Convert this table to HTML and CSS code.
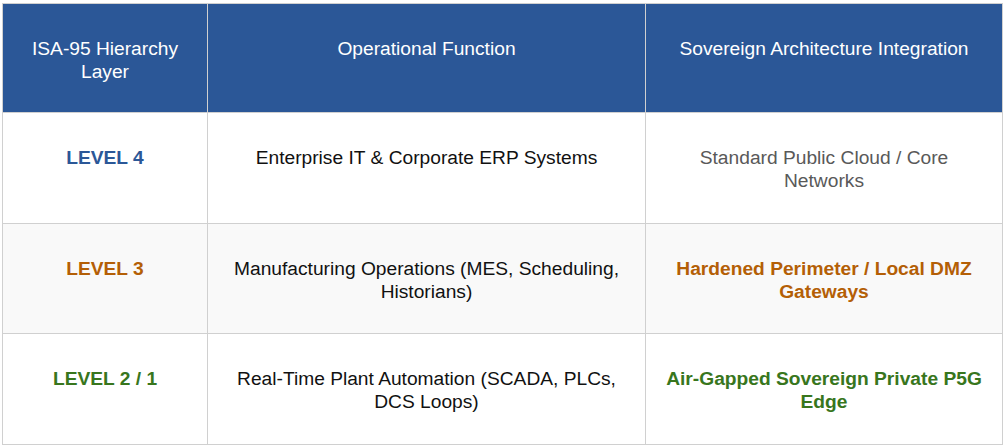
FILE: index.html
```html
<!DOCTYPE html>
<html lang="en">
<head>
<meta charset="utf-8">
<title>ISA-95 Hierarchy</title>
<link rel="stylesheet" href="styles.css">
</head>
<body>
<div class="wrap">
<table class="grid">
  <colgroup>
    <col class="c1">
    <col class="c2">
    <col class="c3">
  </colgroup>
  <thead>
    <tr>
      <th>ISA-95 Hierarchy Layer</th>
      <th>Operational Function</th>
      <th>Sovereign Architecture Integration</th>
    </tr>
  </thead>
  <tbody>
    <tr>
      <td class="lvl blue">LEVEL 4</td>
      <td>Enterprise IT &amp; Corporate ERP Systems</td>
      <td class="muted">Standard Public Cloud / Core Networks</td>
    </tr>
    <tr class="alt">
      <td class="lvl orange">LEVEL 3</td>
      <td>Manufacturing Operations (MES, Scheduling, Historians)</td>
      <td class="lvl orange">Hardened Perimeter / Local DMZ Gateways</td>
    </tr>
    <tr>
      <td class="lvl green">LEVEL 2 / 1</td>
      <td>Real-Time Plant Automation (SCADA, PLCs, DCS Loops)</td>
      <td class="lvl green">Air-Gapped Sovereign Private P5G Edge</td>
    </tr>
  </tbody>
</table>
</div>
</body>
</html>
```
FILE: styles.css
```css
html, body {
  margin: 0;
  padding: 0;
  background: #ffffff;
}
.wrap {
  padding: 3px 2px 0 2px;
}
.grid {
  width: 1000px;
  border-collapse: collapse;
  table-layout: fixed;
  font-family: "Liberation Sans", Arial, sans-serif;
  font-size: 19.2px;
  line-height: 22.7px;
  color: #111;
}
.c1 { width: 205px; }
.c2 { width: 438px; }
.c3 { width: 357px; }
.grid th,
.grid td {
  border: 1px solid #d0d0d0;
  padding: 34px 16px 30px;
  text-align: center;
  vertical-align: top;
}
.grid th {
  background: #2b5797;
  color: #ffffff;
  font-weight: normal;
  padding: 34px 16px 29px;
}
.alt td {
  background: #f9f9f9;
}
.lvl {
  font-weight: bold;
}
.blue { color: #2b5797; }
.orange { color: #b45f06; }
.green { color: #38761d; }
.muted { color: #595959; }
```
